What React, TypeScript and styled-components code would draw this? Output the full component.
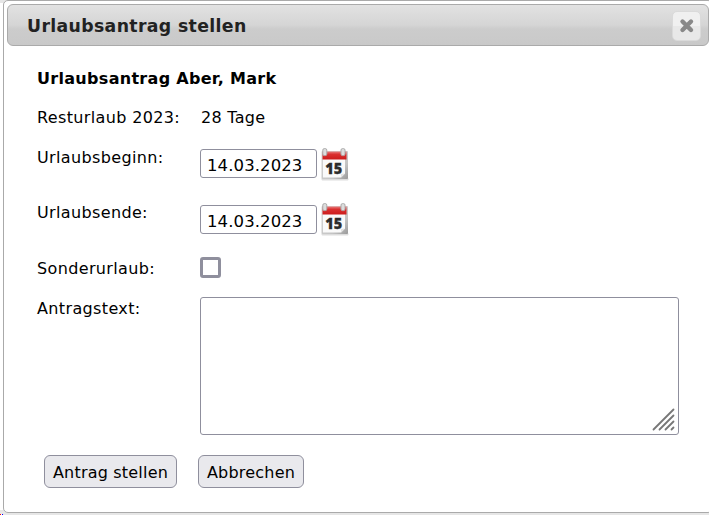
import * as React from "react";
import styled, { createGlobalStyle } from "styled-components";

const GlobalStyle = createGlobalStyle`
  * {
    box-sizing: border-box;
  }
  body {
    margin: 0;
    background: #e6e6e6;
    overflow: hidden;
    font-family: Verdana, "DejaVu Sans", sans-serif;
    font-size: 16px;
    color: #000;
  }
`;

const Page = styled.div`
  width: 709px;
  height: 515px;
  padding-left: 3px;
  background: linear-gradient(90deg, #f00 1px, #fff 1px 2px, #00f 2px) 0 514px /
      3px 1px no-repeat,
    linear-gradient(#fff, #fff) 0 3px / 3px 507px no-repeat;
  overflow: hidden;
`;

const Dialog = styled.div`
  width: 710px;
  height: 513px;
  padding: 3px;
  background: #fff;
  border: 1px solid #aaa;
  border-radius: 5px;
`;

const TitleBar = styled.div`
  display: flex;
  align-items: center;
  justify-content: space-between;
  width: 702px;
  height: 42px;
  padding: 0 7px 0 19px;
  border: 1px solid #aaa;
  border-radius: 6px;
  background: linear-gradient(#e2e2e2 0%, #d5d5d5 50%, #cccccc 60%, #c9c9c9 100%);
`;

const Title = styled.h1`
  margin: 0;
  padding-top: 1px;
  font-size: 17.3px;
  line-height: 22px;
  font-weight: bold;
  color: #222;
  letter-spacing: 0.36px;
  white-space: nowrap;
`;

const CloseButton = styled.button`
  display: flex;
  width: 29px;
  height: 30px;
  margin-top: 1px;
  padding: 0;
  border: 1px solid #dadada;
  border-radius: 5px;
  background: linear-gradient(#f0f0f0 50%, #e8e8e8 50%);
`;

const Content = styled.div`
  padding: 23px 0 0 30px;
`;

const Heading = styled.h2`
  margin: 0;
  height: 20px;
  font-size: 16px;
  line-height: 20px;
  letter-spacing: 0.3px;
`;

const Row = styled.div<{ $height: number; $gap?: number }>`
  display: grid;
  grid-template-columns: 163px 1fr;
  align-items: start;
  height: ${({ $height }) => $height}px;
  margin-top: ${({ $gap }) => $gap ?? 0}px;
`;

const Label = styled.label`
  line-height: 20px;
  letter-spacing: 0.36px;
  white-space: nowrap;
`;

const Value = styled.span`
  padding-left: 1px;
  line-height: 20px;
  letter-spacing: 0.3px;
`;

const DateField = styled.div`
  display: flex;
  gap: 4px;
`;

const DateInput = styled.input<{ $top: number }>`
  width: 117px;
  height: 29px;
  margin: ${({ $top }) => $top}px 0 0;
  padding: 3px 6px 0;
  border: 1px solid #8f8f9d;
  border-radius: 3px;
  background: #fff;
  color: #000;
  font: inherit;
  font-size: 16.5px;
  letter-spacing: 0.1px;
`;

const Checkbox = styled.input`
  appearance: none;
  width: 21px;
  height: 21px;
  margin: -2px 0 0;
  border: 3px solid #8f8f9d;
  border-radius: 3px;
  background: #fff;
`;

const TextBox = styled.div`
  display: flex;
  align-items: flex-end;
  justify-content: flex-end;
  width: 479px;
  height: 138px;
  margin-top: -2px;
  padding: 3px 2px;
  border: 1px solid #8f8f9d;
  border-radius: 3px;
`;

const Buttons = styled.div`
  display: flex;
  gap: 21px;
  margin-top: 18px;
  padding-left: 7px;
`;

const Button = styled.button<{ $width: number }>`
  width: ${({ $width }) => $width}px;
  height: 33px;
  padding: 2px 0 0;
  border: 1px solid #8f8f9d;
  border-radius: 6px;
  background: #e9e9ed;
  color: #000;
  font: inherit;
  letter-spacing: 0.2px;
  white-space: nowrap;
`;

const CloseIcon = () => (
  <svg width='27' height='28' viewBox='0 0 27 28'>
    <path
      d='M9.5 9.5l8.5 8.5M18 9.5l-8.5 8.5'
      stroke='#888'
      strokeWidth='4.4'
      strokeLinecap='round'
    />
  </svg>
);

const CalendarIcon = () => (
  <svg width='30' height='34' viewBox='0 0 30 34'>
    <defs>
      <linearGradient id='red' x1='0' y1='0' x2='0' y2='1'>
        <stop offset='0' stopColor='#e88080' />
        <stop offset='0.35' stopColor='#da3030' />
        <stop offset='1' stopColor='#cc1c1c' />
      </linearGradient>
      <linearGradient id='sheet' x1='0' y1='0' x2='1' y2='1'>
        <stop offset='0' stopColor='#d8d8d8' />
        <stop offset='0.7' stopColor='#c4c4c4' />
        <stop offset='1' stopColor='#999' />
      </linearGradient>
    </defs>
    <rect x='0.5' y='30' width='27' height='2.5' rx='1' fill='#ddd' />
    <rect x='0.5' y='3' width='26.5' height='28' rx='1' fill='url(#sheet)' />
    <path d='M2 11h22v14.5l-4 4H2z' fill='#fafafa' />
    <path d='M24 25.5l-4 4v-3.5z' fill='#e2e2e2' />
    <rect x='1.5' y='3.5' width='24' height='8' fill='url(#red)' />
    <rect x='1.8' y='0.6' width='4' height='7' rx='1.5' fill='#ddd' stroke='#aaa' />
    <rect x='20' y='0.6' width='4' height='7' rx='1.5' fill='#ddd' stroke='#aaa' />
    <text
      x='12.8'
      y='25.6'
      textAnchor='middle'
      fontFamily='"Open Sans", sans-serif'
      fontSize='16.5'
      fontWeight='800'
      fill='#2c2c2c'
      stroke='#2c2c2c'
      strokeWidth='0.3'
      textLength='17'
      lengthAdjust='spacingAndGlyphs'
    >
      15
    </text>
  </svg>
);

const ResizeGrip = () => (
  <svg width='24' height='24' viewBox='0 0 24 24'>
    <path
      d='M1.5 22.5l20-20M7.5 22.5l14-14M13.5 22.5l8-8M19.5 22.5l2-2'
      stroke='#777'
      strokeWidth='1.8'
      strokeLinecap='round'
    />
  </svg>
);

export default function App() {
  return (
    <Page>
      <GlobalStyle />
      <Dialog>
        <TitleBar>
          <Title>Urlaubsantrag stellen</Title>
          <CloseButton aria-label='Schließen'>
            <CloseIcon />
          </CloseButton>
        </TitleBar>
        <Content>
          <Heading>Urlaubsantrag Aber, Mark</Heading>
          <Row $height={20} $gap={19}>
            <Label>Resturlaub 2023:</Label>
            <Value>28 Tage</Value>
          </Row>
          <Row $height={36} $gap={20}>
            <Label>Urlaubsbeginn:</Label>
            <DateField>
              <DateInput $top={1} defaultValue='14.03.2023' />
              <CalendarIcon />
            </DateField>
          </Row>
          <Row $height={36} $gap={19}>
            <Label>Urlaubsende:</Label>
            <DateField>
              <DateInput $top={2} defaultValue='14.03.2023' />
              <CalendarIcon />
            </DateField>
          </Row>
          <Row $height={21} $gap={20}>
            <Label>Sonderurlaub:</Label>
            <Checkbox type='checkbox' />
          </Row>
          <Row $height={138} $gap={19}>
            <Label>Antragstext:</Label>
            <TextBox>
              <ResizeGrip />
            </TextBox>
          </Row>
          <Buttons>
            <Button $width={133}>Antrag stellen</Button>
            <Button $width={106}>Abbrechen</Button>
          </Buttons>
        </Content>
      </Dialog>
    </Page>
  );
}
